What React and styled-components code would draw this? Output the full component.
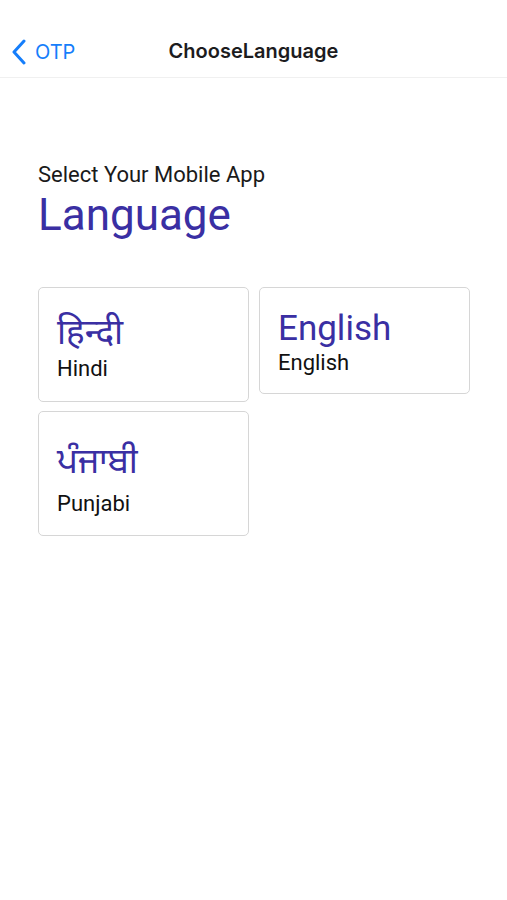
import React from "react";
import styled, { createGlobalStyle } from "styled-components";

const GlobalStyle = createGlobalStyle`
  html, body { margin: 0; padding: 0; background: #fff; }
  body { font-family: Roboto, "Noto Sans", "Noto Sans Devanagari", "Noto Sans Gurmukhi", sans-serif; }
`;

const Page = styled.div`
  width: 507px;
  min-height: 900px;
  background: #fff;
`;

const Header = styled.div`
  height: 78px;
  padding-top: 26px;
  box-sizing: border-box;
  display: flex;
  align-items: center;
  position: relative;
  border-bottom: 1px solid #f0f0f0;
`;

const Back = styled.div`
  display: flex;
  align-items: center;
  gap: 8px;
  padding-left: 11px;
  color: #157efb;
  font-size: 20px;
  font-family: Inter, Roboto, sans-serif;
`;

const Title = styled.div`
  position: absolute;
  left: 0;
  right: 0;
  bottom: 14px;
  text-align: center;
  font-family: Inter, Roboto, sans-serif;
  font-weight: 600;
  font-size: 20px;
  color: #1c1c1e;
  pointer-events: none;
`;

const Body = styled.div`
  padding: 84px 37px 0 38px;
`;

const Subtitle = styled.div`
  font-size: 22px;
  color: #1a1a1a;
  line-height: 26px;
`;

const Heading = styled.div`
  font-size: 44px;
  color: #3a2fa3;
  line-height: 50px;
  margin-top: 2px;
`;

const Grid = styled.div`
  margin-top: 47px;
  display: flex;
  flex-wrap: wrap;
  align-items: flex-start;
  column-gap: 10px;
  row-gap: 9px;
`;

const Card = styled.div`
  width: 211px;
  box-sizing: border-box;
  border: 1.5px solid #d6d6d6;
  border-radius: 5px;
  padding: ${(p) => p.$pad};
`;

const Native = styled.div`
  font-size: 35px;
  color: #3a2fa3;
  line-height: 42px;
`;

const Label = styled.div`
  font-size: 22px;
  color: #111;
  line-height: 26px;
  margin-top: ${(p) => p.$gap || 0}px;
`;

const langs = [
  { native: "हिन्दी", label: "Hindi", pad: "24px 18px 19px", gap: 2 },
  { native: "English", label: "English", pad: "20px 18px 17px", gap: 0 },
  { native: "ਪੰਜਾਬੀ", label: "Punjabi", pad: "29px 18px 18px", gap: 8 },
];

export default function App() {
  return (
    <Page>
      <GlobalStyle />
      <Header>
        <Back>
          <svg width="16" height="26" viewBox="0 0 16 26">
            <path d="M13 2 L3 13 L13 24" fill="none" stroke="#157efb" strokeWidth="3" strokeLinecap="round" strokeLinejoin="round" />
          </svg>
          OTP
        </Back>
        <Title>ChooseLanguage</Title>
      </Header>
      <Body>
        <Subtitle>Select Your Mobile App</Subtitle>
        <Heading>Language</Heading>
        <Grid>
          {langs.map((l) => (
            <Card key={l.label} $pad={l.pad}>
              <Native>{l.native}</Native>
              <Label $gap={l.gap}>{l.label}</Label>
            </Card>
          ))}
        </Grid>
      </Body>
    </Page>
  );
}
